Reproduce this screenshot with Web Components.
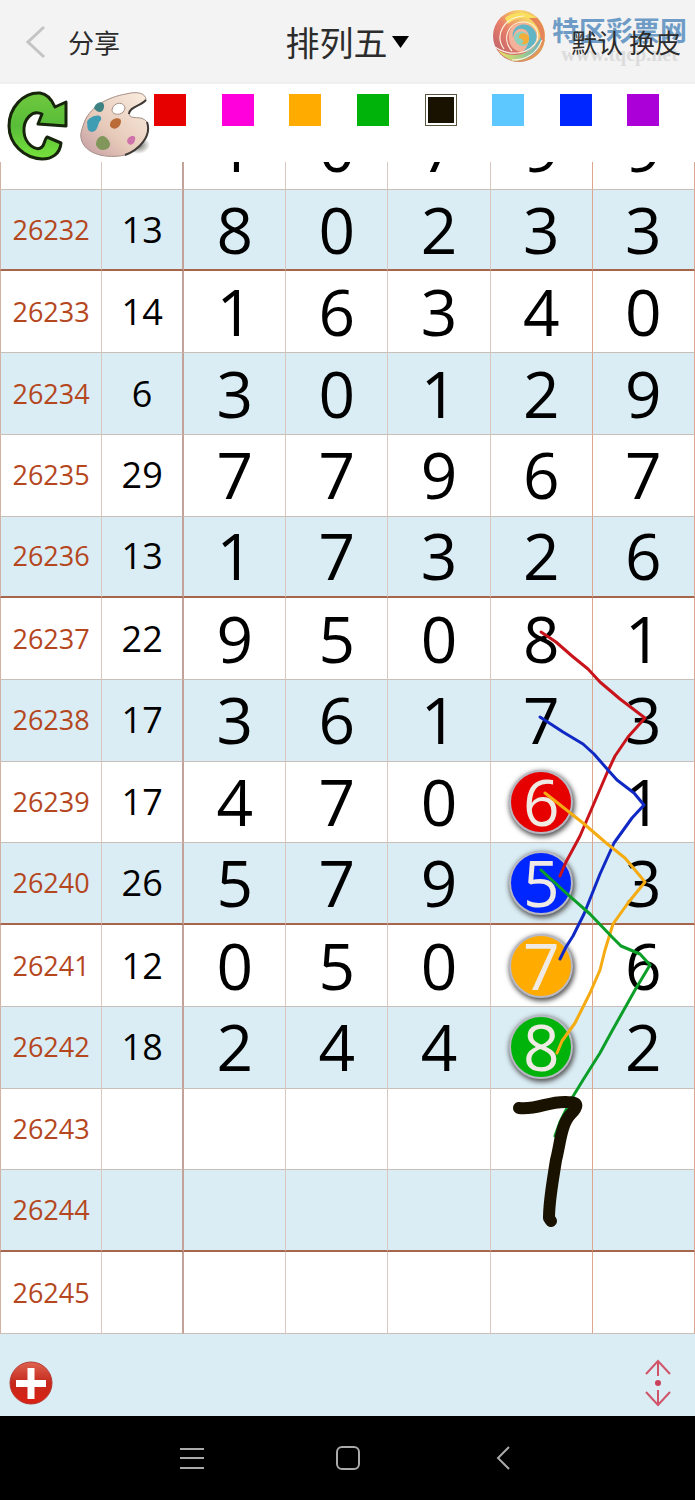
<!DOCTYPE html>
<html lang="zh-CN">
<head>
<meta charset="utf-8">
<meta name="viewport" content="width=device-width, initial-scale=1">
<title>排列五</title>
<style>
	body {
		margin: 0;
		font-family: "Open Sans", "Noto Sans", "Noto Sans CJK SC", sans-serif;
	}
</style>
</head>
<body>
<lottery-app></lottery-app>

<script>
const COLORS = [
	{name: "红", value: "#e60000"},
	{name: "粉", value: "#ff00dc"},
	{name: "橙", value: "#ffab00"},
	{name: "绿", value: "#00b30a"},
	{name: "黑", value: "#1a1200", selected: true},
	{name: "浅蓝", value: "#5cc8ff"},
	{name: "蓝", value: "#0026ff"},
	{name: "紫", value: "#ac00d8"},
];

// issue, sum, digits. marks: column index -> ball colour.
const DRAWS = [
	{issue: "26231", sum: 26, digits: "10799"},
	{issue: "26232", sum: 13, digits: "80233", rule: true},
	{issue: "26233", sum: 14, digits: "16340"},
	{issue: "26234", sum: 6, digits: "30129"},
	{issue: "26235", sum: 29, digits: "77967"},
	{issue: "26236", sum: 13, digits: "17326", rule: true},
	{issue: "26237", sum: 22, digits: "95081"},
	{issue: "26238", sum: 17, digits: "36173"},
	{issue: "26239", sum: 17, digits: "47061", marks: {3: "#e60000"}},
	{issue: "26240", sum: 26, digits: "57953", marks: {3: "#0026ff"}, rule: true},
	{issue: "26241", sum: 12, digits: "05076", marks: {3: "#ffab00"}},
	{issue: "26242", sum: 18, digits: "24482", marks: {3: "#00b30a"}},
	{issue: "26243"},
	{issue: "26244", rule: true},
	{issue: "26245"},
];

// Pen strokes, in the coordinates of the drawing layer.
const STROKES = [
	{color: "#c9141c", width: 3, d: "M541 632L556 642L572 656L588 669L600 682L620 699L645 718L628 737L615 756L607 773L592 808L580 836L566 862L560 876"},
	{color: "#1029c4", width: 3, d: "M540 717L563 732L583 744L594 754L608 770L617 780L634 793L644 805L632 818L614 843L600 874L584 914L573 936L566 947L560 959"},
	{color: "#f5ab12", width: 3, d: "M545 793L583 823L605 842L625 858L645 882L628 903L613 924L605 950L600 970L590 993L575 1023L562 1041L557 1053"},
	{color: "#0b9e28", width: 3, d: "M541 870L565 892L590 914L612 937L621 946L640 954L650 965L635 990L612 1031L600 1053L583 1080L572 1098L560 1122L555 1136"},
	{color: "#1a1200", width: 12, d: "M519 1108C538 1110 548 1101 567 1102C580 1102 578 1107 570 1115C561 1125 560 1145 556 1160C553 1180 549 1200 549 1218L551 1221"},
];

class SiteMark extends HTMLElement {
	connectedCallback() {
		this.attachShadow({mode: "open"}).innerHTML = `
			<style>
				:host {
					display: flex;
					align-items: center;
					gap: 6px;
					pointer-events: none;
				}
				svg {
					width: 54px;
					height: 54px;
				}
				.words {
					display: flex;
					flex-direction: column;
					align-items: center;
					padding-top: 8px;
				}
				.name {
					font: bold 27px/28px "Noto Sans CJK SC", sans-serif;
					color: #6f9cc6;
				}
				.site {
					font: bold 20px/20px "Liberation Serif", serif;
					color: #dcdcdc;
				}
			</style>
			<svg viewBox="0 0 54 54" aria-hidden="true">
				<defs>
					<linearGradient id="warm" x1="0" y1="1" x2="1" y2="0">
						<stop offset="0" stop-color="#b4586c"/>
						<stop offset="0.45" stop-color="#e8806a"/>
						<stop offset="0.75" stop-color="#f6d468"/>
						<stop offset="1" stop-color="#ee9a5c"/>
					</linearGradient>
					<linearGradient id="cool" x1="0" y1="0" x2="1" y2="0">
						<stop offset="0" stop-color="#f1dc62"/>
						<stop offset="0.5" stop-color="#a9cf86"/>
						<stop offset="1" stop-color="#62b3c4"/>
					</linearGradient>
				</defs>
				<circle cx="27" cy="27" r="26" fill="url(#warm)"/>
				<path d="M13 9C24 0 43 3 50 16C40 7 26 6 16 15Z" fill="#f8df5e"/>
				<path d="M45 9C56 20 54 34 47 43C51 29 48 17 37 9Z" fill="#e58558"/>
				<path d="M6 41C20 50 38 48 49 28C51 40 36 53 22 52C14 50 9 46 6 41Z" fill="url(#cool)"/>
				<path d="M20 52C36 53 48 44 53 29C52 45 39 55 20 52Z" fill="#e09a54"/>
				<path d="M17 28C16 13 36 8 44 22C49 33 40 45 29 43C20 41 17 35 17 28Z" fill="#f3b39a"/>
				<path d="M21 29C18 16 35 10 43 22C48 32 40 43 31 43C38 36 40 22 31 20C25 19 22 23 21 29Z" fill="#62b5c5"/>
				<path d="M22 29C24 19 38 21 37 32C35 40 24 38 22 29Z" fill="#8ed0bd"/>
				<path d="M27 29C26 24 34 22 37 28C38 34 33 37 29 34C33 34 32 30 27 29Z" fill="#f2ae38"/>
				<path d="M3 38C18 48 38 46 46 30M12 40C2 26 12 8 32 7M20 42C9 30 16 12 33 13C42 14 48 22 45 31M20 51C34 51 45 44 50 31" fill="none" stroke="#fdf0dc" stroke-width="1.2"/>
			</svg>
			<div class="words">
				<span class="name">特区彩票网</span>
				<span class="site">www.tqcp.net</span>
			</div>
		`;
	}
}
customElements.define("site-mark", SiteMark);

class TitleBar extends HTMLElement {
	connectedCallback() {
		this.attachShadow({mode: "open"}).innerHTML = `
			<style>
				:host {
					display: grid;
					grid-template-columns: 1fr auto 1fr;
					align-items: center;
					position: relative;
					box-sizing: border-box;
					height: 84px;
					background: #f3f3f3;
					border-bottom: 2px solid #efefef;
					color: #2c2c2c;
				}
				button {
					display: flex;
					align-items: center;
					padding: 0;
					border: 0;
					background: none;
					color: inherit;
					font: 26px/36px "Noto Sans CJK SC", sans-serif;
					cursor: pointer;
				}
				.left {
					display: flex;
					gap: 20px;
					padding: 2px 0 0 26px;
				}
				.title {
					gap: 4px;
					padding-top: 2px;
					font-size: 34px;
				}
				.right {
					justify-self: end;
					padding: 2px 14px 0 0;
					position: relative;
					z-index: 1;
				}
				site-mark {
					position: absolute;
					right: 8px;
					top: 8px;
				}
			</style>
			<div class="left">
				<button aria-label="返回"><svg width="22" height="36" viewBox="0 0 22 36" aria-hidden="true"><path d="M18 3L2 18L18 33" fill="none" stroke="#c4c4c4" stroke-width="3"/></svg></button>
				<button>分享</button>
			</div>
			<button class="title">排列五<svg width="18" height="12" viewBox="0 0 18 12" aria-hidden="true"><path d="M0 0H17L8.500 12Z" fill="#000"/></svg></button>
			<button class="right">默认 换皮</button>
			<site-mark></site-mark>
		`;
	}
}
customElements.define("title-bar", TitleBar);

class ColorBar extends HTMLElement {
	connectedCallback() {
		let shadow = this.attachShadow({mode: "open"});
		shadow.innerHTML = `
			<style>
				:host {
					display: flex;
					align-items: flex-start;
					box-sizing: border-box;
					height: 78px;
					padding-top: 6px;
					background: #fff;
				}
				button {
					padding: 0;
					border: 0;
					background: none;
					cursor: pointer;
				}
				.tools {
					display: flex;
					gap: 8px;
					width: 148px;
					padding-left: 6px;
				}
				svg {
					display: block;
				}
				#swatches {
					flex: 1;
					display: grid;
					grid-template-columns: repeat(8, 1fr);
					padding-top: 4px;
				}
				#swatches button {
					box-sizing: border-box;
					width: 32px;
					height: 32px;
				}
				#swatches .selected {
					border: 1px solid #5a553f;
					padding: 2px;
					background-clip: content-box;
				}
			</style>
			<div class="tools">
				<button aria-label="刷新">
					<svg width="64" height="72" viewBox="0 0 64 72" aria-hidden="true">
						<defs>
							<linearGradient id="leaf" x1="0" y1="0" x2="0" y2="1">
								<stop offset="0" stop-color="#6fc83e"/>
								<stop offset="0.5" stop-color="#58bd38"/>
								<stop offset="1" stop-color="#78e23c"/>
							</linearGradient>
						</defs>
						<path d="M49 17L60 12L60 36L32 34L36 24C26 19 17 30 18 42C19 54 30 62 36 57C39 54 38 50 41 47L55 53C54 64 46 69 36 69C18 68 3 54 3 36C3 18 17 2 34 3C42 4 46 10 49 17Z" fill="url(#leaf)" stroke="#17240c" stroke-width="3" stroke-linejoin="round"/>
					</svg>
				</button>
				<button aria-label="调色板">
					<svg width="72" height="72" viewBox="0 0 72 72" aria-hidden="true">
						<defs>
							<linearGradient id="wood" x1="0" y1="1" x2="1" y2="0">
								<stop offset="0" stop-color="#c29aa2"/>
								<stop offset="0.4" stop-color="#e6c9b9"/>
								<stop offset="1" stop-color="#faeee0"/>
							</linearGradient>
							<radialGradient id="shade">
								<stop offset="0" stop-color="#62665c"/>
								<stop offset="1" stop-color="#62665c" stop-opacity="0"/>
							</radialGradient>
						</defs>
						<ellipse cx="60" cy="55" rx="12" ry="9" fill="url(#shade)"/>
						<path fill-rule="evenodd" d="M5 36C10 17 30 7 48 4C59 1 68 3 68 10C63 16 51 17 51 24C53 31 63 24 69 32C74 46 61 60 47 65C30 69 6 65 3 48C2 44 4 39 5 36ZM34 20C34 26 46 26 47 18C46 11 35 12 34 20Z" fill="url(#wood)" stroke="#a58f87"/>
						<path d="M68 10C63 16 51 17 51 24M69 32C74 46 61 60 47 65" fill="none" stroke="#3f3a37" stroke-width="2"/>
						<path d="M16 18C18 11 27 10 26 17C25 24 19 23 16 18Z" fill="#3f8284"/>
						<path d="M9 32C11 26 25 22 23 30C19 33 21 41 14 42C8 41 10 36 9 32Z" fill="#3f9db3"/>
						<path d="M32 36C31 28 43 26 43 31C43 37 36 42 32 36Z" fill="#ba6b38"/>
						<path d="M18 55C18 46 26 42 31 51C34 56 30 60 25 60C22 60 19 58 18 55Z" fill="#80965a"/>
						<path d="M49 51C50 45 59 44 57 50C56 56 50 56 49 51Z" fill="#cf72ab"/>
					</svg>
				</button>
			</div>
			<div id="swatches"></div>
		`;
		for (let c of COLORS) {
			let b = document.createElement("button");
			b.setAttribute("aria-label", c.name);
			b.style.backgroundColor = c.value;
			if (c.selected) b.className = "selected";
			b.addEventListener("click", () => this.select(b));
			shadow.getElementById("swatches").appendChild(b);
		}
	}

	select(button) {
		for (let b of this.shadowRoot.querySelectorAll("#swatches button")) b.classList.toggle("selected", b == button);
	}
}
customElements.define("color-bar", ColorBar);

class NumberBall extends HTMLElement {
	connectedCallback() {
		this.attachShadow({mode: "open"}).innerHTML = `
			<style>
				:host {
					display: flex;
					align-items: center;
					justify-content: center;
					box-sizing: border-box;
					width: 64px;
					height: 64px;
					margin: 0 auto;
					border: 2px solid #b9b9c4;
					border-radius: 50%;
					box-shadow: 1px 2px 5px 1px #555;
					color: #efeae4;
				}
			</style>
			<slot></slot>
		`;
		this.style.backgroundColor = this.getAttribute("color");
	}
}
customElements.define("number-ball", NumberBall);

class TrendChart extends HTMLElement {
	connectedCallback() {
		let shadow = this.attachShadow({mode: "open"});
		shadow.innerHTML = `
			<style>
				:host {
					display: flex;
					flex-direction: column;
					justify-content: flex-end;
					overflow: hidden;
					background: #fff;
				}
				/* The list is scrolled to its end: the oldest row is cut by the top edge. */
				#sheet {
					flex: none;
					height: calc(100% + 54px);
					position: relative;
				}
				table {
					width: 100%;
					height: 100%;
					table-layout: fixed;
					border-collapse: separate;
					border-spacing: 0;
					color: #000;
				}
				tr {
					height: 80px;
				}
				.issueCol { width: 14.7%; }
				.sumCol { width: 11.8%; }
				th, td {
					box-sizing: border-box;
					padding: 0;
					text-align: center;
					vertical-align: middle;
					font-weight: normal;
					border-right: 1px solid #d8c8c0;
					border-bottom: 1px solid #c9bfb8;
					font-size: 64px;
					line-height: 64px;
				}
				th {
					border-left: 1px solid #d3b3a6;
					color: #b5471f;
					font-size: 27px;
				}
				.sum {
					border-right: 2px solid #c3a29a;
					font-size: 36px;
				}
				td:nth-child(6), td:nth-child(7) {
					border-right-color: #dca68e;
				}
				tr:nth-child(even) {
					background: #daedf4;
				}
				tr.rule > * {
					border-bottom: 2px solid #a5664c;
				}
				svg {
					position: absolute;
					inset: 0;
					width: 100%;
					height: 100%;
					pointer-events: none;
				}
				path {
					fill: none;
					stroke-linecap: round;
					stroke-linejoin: round;
				}
			</style>
			<div id="sheet">
				<table>
					<colgroup><col class="issueCol"><col class="sumCol"><col span="5"></colgroup>
					<tbody></tbody>
				</table>
				<svg viewBox="0 108 695 1226" preserveAspectRatio="none" aria-hidden="true"></svg>
			</div>
		`;
		this.addRows(shadow.querySelector("tbody"));
		this.addStrokes(shadow.querySelector("svg"));
	}

	addRows(body) {
		for (let draw of DRAWS) {
			let tr = document.createElement("tr");
			if (draw.rule) tr.className = "rule";
			let th = document.createElement("th");
			th.scope = "row";
			th.textContent = draw.issue;
			tr.appendChild(th);
			let sum = document.createElement("td");
			sum.className = "sum";
			if (draw.sum != undefined) sum.textContent = draw.sum;
			tr.appendChild(sum);
			for (let i = 0; i < 5; i++) {
				let td = document.createElement("td");
				if (draw.marks && draw.marks[i]) {
					let ball = document.createElement("number-ball");
					ball.setAttribute("color", draw.marks[i]);
					ball.textContent = draw.digits[i];
					td.appendChild(ball);
				} else if (draw.digits) {
					td.textContent = draw.digits[i];
				}
				tr.appendChild(td);
			}
			body.appendChild(tr);
		}
	}

	addStrokes(svg) {
		for (let s of STROKES) {
			let p = document.createElementNS("http://www.w3.org/2000/svg", "path");
			p.setAttribute("d", s.d);
			p.setAttribute("stroke", s.color);
			p.setAttribute("stroke-width", s.width);
			svg.appendChild(p);
		}
	}
}
customElements.define("trend-chart", TrendChart);

class ChartFooter extends HTMLElement {
	connectedCallback() {
		this.attachShadow({mode: "open"}).innerHTML = `
			<style>
				:host {
					display: flex;
					justify-content: space-between;
					align-items: center;
					box-sizing: border-box;
					height: 82px;
					padding: 16px 22px 0 8px;
					background: #daedf4;
				}
				button {
					padding: 0;
					border: 0;
					background: none;
					cursor: pointer;
				}
				svg {
					display: block;
				}
			</style>
			<button aria-label="添加">
				<svg width="46" height="46" viewBox="0 0 46 46" aria-hidden="true">
					<defs>
						<linearGradient id="red" x1="0" y1="0" x2="0" y2="1">
							<stop offset="0" stop-color="#de6350"/>
							<stop offset="0.5" stop-color="#c5281c"/>
							<stop offset="1" stop-color="#da2114"/>
						</linearGradient>
					</defs>
					<circle cx="23" cy="23" r="21" fill="url(#red)" stroke="#b53a32"/>
					<path d="M23 8V39M8 23.500H38" stroke="#fff" stroke-width="7"/>
				</svg>
			</button>
			<button aria-label="上下滚动">
				<svg width="30" height="52" viewBox="0 0 30 52" aria-hidden="true">
					<path d="M3 17L15 4L27 17M15 4V19M3 35L15 48L27 35M15 48V33" fill="none" stroke="#d0546a" stroke-width="2"/>
					<circle cx="15" cy="26" r="3" fill="#c9415a"/>
				</svg>
			</button>
		`;
	}
}
customElements.define("chart-footer", ChartFooter);

class SystemNav extends HTMLElement {
	connectedCallback() {
		this.attachShadow({mode: "open"}).innerHTML = `
			<style>
				:host {
					display: flex;
					justify-content: center;
					align-items: center;
					gap: 128px;
					height: 84px;
					background: #000;
				}
				button {
					padding: 0;
					border: 0;
					background: none;
					cursor: pointer;
				}
				svg {
					display: block;
					fill: none;
					stroke: #aaa;
					stroke-width: 2;
				}
			</style>
			<button aria-label="菜单"><svg width="28" height="28" viewBox="0 0 28 28"><path d="M2 5H26M2 14H26M2 24H26"/></svg></button>
			<button aria-label="主页"><svg width="28" height="28" viewBox="0 0 28 28"><rect x="3" y="3" width="22" height="22" rx="5"/></svg></button>
			<button aria-label="后退"><svg width="28" height="28" viewBox="0 0 28 28"><path d="M19 3L8 14L19 25"/></svg></button>
		`;
	}
}
customElements.define("system-nav", SystemNav);

class LotteryApp extends HTMLElement {
	connectedCallback() {
		this.attachShadow({mode: "open"}).innerHTML = `
			<style>
				:host {
					display: flex;
					flex-direction: column;
					height: 100vh;
				}
				title-bar, color-bar, chart-footer, system-nav {
					flex: none;
				}
				trend-chart {
					flex: 1;
					min-height: 0;
				}
			</style>
			<title-bar></title-bar>
			<color-bar></color-bar>
			<trend-chart></trend-chart>
			<chart-footer></chart-footer>
			<system-nav></system-nav>
		`;
	}
}
customElements.define("lottery-app", LotteryApp);
</script>
</body>
</html>
